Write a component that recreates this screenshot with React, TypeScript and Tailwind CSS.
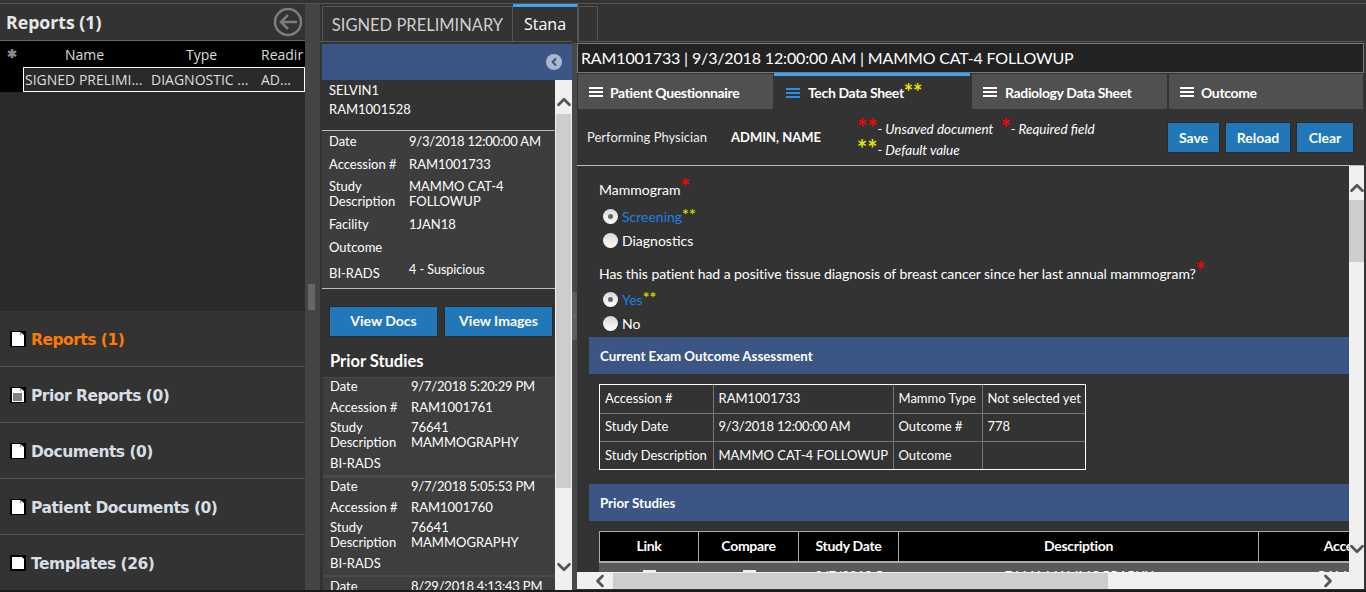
import type { ReactNode } from 'react'
import { ChevronDown, ChevronLeft, ChevronRight, ChevronUp } from 'lucide-react'

const navItems = [
  { label: 'Reports (1)', active: true, icon: 'doc' },
  { label: 'Prior Reports (0)', icon: 'prior' },
  { label: 'Documents (0)', icon: 'doc' },
  { label: 'Patient Documents (0)', icon: 'doc' },
  { label: 'Templates (26)', icon: 'tpl' },
]

const priorStudies = [
  { date: '9/7/2018 5:20:29 PM', accession: 'RAM1001761' },
  { date: '9/7/2018 5:05:53 PM', accession: 'RAM1001760' },
]

function NavIcon({ type }: { type: string }) {
  if (type === 'tpl') {
    return (
      <svg width="16" height="16" viewBox="0 0 16 16" className="shrink-0">
        <rect width="16" height="16" fill="#000" />
        <path d="M2 2h10l2 2v10H2z" fill="#fff" />
      </svg>
    )
  }
  return (
    <svg width="16" height="16" viewBox="0 0 16 16" className="shrink-0">
      <rect width="16" height="16" fill="#000" />
      <path d="M2 1h8v3h4v11H2z" fill="#fff" />
      <path d="M10.5 1l3.5 3h-3.5z" fill="#fff" />
      {type === 'prior' && <rect x="3" y="6" width="9" height="8" fill="#808080" />}
    </svg>
  )
}

function InfoRow({ label, value, className, labelWidth = 'w-[80px]' }: { label: ReactNode; value?: ReactNode; className: string; labelWidth?: string }) {
  return (
    <div className={`flex leading-[15px] ${className}`}>
      <div className={`shrink-0 ${labelWidth}`}>{label}</div>
      <div>{value}</div>
    </div>
  )
}

function DateText({ children }: { children: ReactNode }) {
  return <span className="tracking-[-0.2px]">{children}</span>
}

function MenuLines({ color }: { color: string }) {
  return (
    <svg width="14" height="10" viewBox="0 0 14 10" className="shrink-0">
      <path d="M0 1h14M0 5h14M0 9h14" stroke={color} strokeWidth="2" />
    </svg>
  )
}

function Radio({ checked }: { checked?: boolean }) {
  return (
    <span className="flex h-[15px] w-[15px] shrink-0 items-center justify-center rounded-full bg-gradient-to-b from-[#d8d8d8] to-white">
      {checked && <span className="h-[5px] w-[5px] rounded-full bg-[#666]" />}
    </span>
  )
}

// large asterisks sit on a zero line height so they don't push the line apart
function Star({ className, count = 2 }: { className: string; count?: number }) {
  return (
    <span className={`relative font-bold not-italic leading-[0] ${className}`}>
      {'*'.repeat(count)}
    </span>
  )
}

function SectionBar({ children }: { children: ReactNode }) {
  return (
    <div className="flex h-[37px] items-center bg-[#3b5684] pl-[11px] pt-[3px] text-[13.3px] font-bold text-white">
      {children}
    </div>
  )
}

function Button({ children, className }: { children: ReactNode; className: string }) {
  return (
    <button className={`h-[31px] border border-[#2b2b2b] bg-[#2277b8] text-[14px] font-bold text-white ${className}`}>
      {children}
    </button>
  )
}

export default function App() {
  return (
    <div className="flex h-[592px] w-[1366px] flex-col overflow-hidden bg-[#333] font-['Lato',sans-serif] text-[14px] text-white">
      <div className="h-[4px] shrink-0 border-b border-[#555] bg-[#333]" />

      <div className="flex h-[586px] min-h-0 shrink-0">
        {/* Left panel */}
        <div className="flex w-[305px] shrink-0 flex-col overflow-hidden font-['Open_Sans',sans-serif]">
          <div className="flex h-[37px] shrink-0 items-center justify-between border-b border-[#666] pl-[6px] pr-[2px]">
            <span className="text-[17.7px] font-bold text-[#e8e8e8]">Reports (1)</span>
            <svg width="30" height="30" viewBox="0 0 30 30" fill="none" stroke="#7d7d7d">
              <circle cx="15" cy="15" r="13" strokeWidth="2.5" />
              <path d="M24 15H8M15 8l-7 7 7 7" strokeWidth="2.5" />
            </svg>
          </div>
          <div className="flex h-[26px] shrink-0 items-center bg-black text-[14px] text-[#ddd]">
            <span className="w-[23px] pl-[7px] text-[12px] font-bold leading-none text-[#888]">✱</span>
            <span className="w-[101px] pl-[42px]">Name</span>
            <span className="w-[137px] whitespace-nowrap pl-[62px]">Type</span>
            <span className="whitespace-nowrap">Readir</span>
          </div>
          <div className="flex h-[25px] shrink-0 bg-[#2a2a2a] text-[14px] text-[#ddd]">
            <div className="w-[23px] bg-black" />
            <div className="flex w-[282px] items-center whitespace-nowrap border border-white pl-[1px]">
              <span className="w-[126px]">SIGNED PRELIMI...</span>
              <span className="w-[110px]">DIAGNOSTIC ...</span>
              <span>AD...</span>
            </div>
          </div>
          <div className="h-[219px] shrink-0 bg-[#2a2a2a]" />
          {navItems.map((item) => (
            <div key={item.label} className="flex h-[56px] shrink-0 items-center gap-[5px] border-b border-[#555] pl-[10px] pt-[1px] font-['DejaVu_Sans',sans-serif]">
              <NavIcon type={item.icon} />
              <span className={`pt-[4px] text-[15.5px] font-bold tracking-[-0.5px] ${item.active ? 'text-[#ff7a00]' : 'text-[#d9dee3]'}`}>
                {item.label}
              </span>
            </div>
          ))}
        </div>

        {/* Splitter */}
        <div className="flex w-[15px] shrink-0 flex-col bg-[#444]">
          <div className="ml-[3px] mt-[280px] h-[26px] w-[7px] bg-[#666]" />
        </div>

        {/* Center panel */}
        <div className="flex w-[252px] shrink-0 flex-col text-[13px]">
          <div className="flex h-[38px] shrink-0 items-end border-b border-[#555] pl-[2px]">
            <div className="flex h-[35px] w-[191px] shrink-0 items-center justify-center border border-b-0 border-[#555] pt-[3px] text-[16.5px] text-[#cfcfcf]">
              SIGNED PRELIMINARY
            </div>
            <div className="flex h-[37px] w-[65px] shrink-0 items-center justify-center border-t-[3px] border-r border-[#3ea6ee] border-r-[#555] font-['Open_Sans',sans-serif] text-[16px]">
              Stana
            </div>
          </div>
          <div className="ml-[2px] mt-[2px] flex h-[36px] shrink-0 items-center justify-end bg-[#3b5684] pr-[10px]">
            <span className="flex h-[16px] w-[16px] items-center justify-center rounded-full bg-[#a9b7cf]">
              <ChevronLeft size={12} strokeWidth={4} color="#3b5684" />
            </span>
          </div>
          <div className="flex min-h-0 flex-1 pl-[2px]">
            <div className="min-w-0 flex-1 overflow-hidden">
              <div className="h-[50px] pl-[7px] pt-[1px] leading-[19px]">
                <div>SELVIN1</div>
                <div>RAM1001528</div>
              </div>
              <div className="h-[159px] border-y border-[#bbb] bg-[#3d3d3d] pl-[7px]">
                <InfoRow label="Date" value={<DateText>9/3/2018 12:00:00 AM</DateText>} className="-mt-[1px] h-[23px] items-center" />
                <InfoRow label="Accession #" value="RAM1001733" className="h-[23px] items-center" />
                <InfoRow label={<>Study<br />Description</>} value={<>MAMMO CAT-4<br />FOLLOWUP</>} className="h-[37px] items-start pt-[3px]" />
                <InfoRow label="Facility" value="1JAN18" className="h-[23px] items-center" />
                <InfoRow label="Outcome" className="h-[23px] items-center" />
                <div className="flex h-[23px] items-center">
                  <div className="mt-[7px] w-[80px]">BI-RADS</div>
                  <div className="text-[12.5px]">4 - Suspicious</div>
                </div>
              </div>
              <div className="flex gap-[6px] pl-[7px] pt-[17px]">
                <Button className="w-[109px] pb-[2px]">View Docs</Button>
                <Button className="w-[109px] pb-[2px]">View Images</Button>
              </div>
              <div className="pl-[8px] pt-[14px] text-[16.5px] font-bold leading-[21px]">Prior Studies</div>
              <div className="mt-[5px] pl-[1px]">
                {priorStudies.map((study) => (
                  <div key={study.accession} className="h-[100px] border-b-[2px] border-t border-[#4a4a4a] bg-[#3e3e3e] pl-[7px]">
                    <InfoRow label="Date" value={<DateText>{study.date}</DateText>} labelWidth="w-[81px]" className="h-[17px] items-center" />
                    <InfoRow label="Accession #" value={study.accession} labelWidth="w-[81px]" className="mt-[2px] h-[20px] items-center" />
                    <InfoRow label={<>Study<br />Description</>} value={<>76641<br />MAMMOGRAPHY</>} labelWidth="w-[81px]" className="h-[35px] items-center" />
                    <InfoRow label="BI-RADS" labelWidth="w-[81px]" className="mt-[1px] h-[20px] items-center" />
                  </div>
                ))}
                <div className="h-[20px] bg-[#3e3e3e] pl-[7px]">
                  <InfoRow label="Date" value={<DateText>8/29/2018 4:13:43 PM</DateText>} labelWidth="w-[81px]" className="h-[19px] items-center" />
                </div>
              </div>
            </div>
            {/* Scrollbar */}
            <div className="flex w-[17px] shrink-0 flex-col items-center bg-[#f0f0f0] px-[1px] text-[#555]">
              <div className="flex h-[34px] items-end justify-center pb-[1px]">
                <ChevronUp size={22} strokeWidth={3} className="shrink-0" />
              </div>
              <div className="h-[374px] w-full bg-[#cdcdcd]" />
              <div className="flex flex-1 items-start justify-center pt-[68px]">
                <ChevronDown size={22} strokeWidth={3} className="shrink-0" />
              </div>
            </div>
          </div>
        </div>

        {/* Splitter */}
        <div className="mt-[39px] flex w-[5px] shrink-0 flex-col bg-[#484848]">
          <div className="mt-[249px] flex h-[48px] items-center justify-center bg-[#5e5e5e]">
            <ChevronLeft size={8} strokeWidth={3} color="#8a8a8a" />
          </div>
        </div>

        {/* Right panel */}
        <div className="flex min-w-0 flex-1 flex-col pb-[1px] pr-[2px]">
          <div className="h-[38px] shrink-0 border-b border-[#555] pl-[1px]">
            <div className="mt-[2px] h-[35px] w-[20px] border border-b-0 border-[#555]" />
          </div>
          <div className="mt-[1px] flex h-[30px] shrink-0 items-center border border-[#777] bg-[#222] pl-[3px] text-[16px] tracking-[-0.15px]">
            RAM1001733 | 9/3/2018 12:00:00 AM | MAMMO CAT-4 FOLLOWUP
          </div>
          <div className="flex h-[36px] shrink-0 pl-[1px] text-[14px] font-bold tracking-[-0.35px]">
            <div className="mt-[1px] flex w-[195px] items-center gap-[7px] bg-[#505050] pl-[11px] pt-[1px]">
              <MenuLines color="#fff" />
              Patient Questionnaire
            </div>
            <div className="ml-[1px] flex w-[196px] items-center gap-[8px] border-t-[3px] border-[#3ea6ee] pl-[12px]">
              <MenuLines color="#2b8fe6" />
              <span>Tech Data Sheet<Star className="top-[2px] text-[22px] tracking-normal text-[#e6e600]" /></span>
            </div>
            <div className="ml-[2px] mt-[1px] flex w-[195px] items-center gap-[8px] bg-[#505050] pl-[11px] pt-[1px]">
              <MenuLines color="#fff" />
              Radiology Data Sheet
            </div>
            <div className="ml-[2px] mt-[1px] flex w-[194px] items-center gap-[7px] bg-[#505050] pl-[11px] pt-[1px]">
              <MenuLines color="#fff" />
              Outcome
            </div>
          </div>
          <div className="flex h-[57px] shrink-0 items-center border-b border-[#bbb] pl-[10px] pt-[1px]">
            <span className="w-[144px] text-[13px] text-[#eee]">Performing Physician</span>
            <span className="w-[126px] text-[13px] font-bold">ADMIN, NAME</span>
            <div className="mt-[5px] w-[310px] text-[13.5px] italic leading-[21px]">
              <div>
                <Star className="top-[3px] text-[24px] text-[#ff0000]" />- Unsaved document <span className="ml-[4px]"><Star className="top-[3px] text-[24px] text-[#ff0000]" count={1} /></span>- Required field
              </div>
              <div><Star className="top-[3px] text-[24px] text-[#e6e600]" />- Default value</div>
            </div>
            <div className="flex gap-[5px]">
              <Button className="w-[53px]">Save</Button>
              <Button className="w-[66px]">Reload</Button>
              <Button className="w-[58px]">Clear</Button>
            </div>
          </div>

          <div className="flex min-h-0 flex-1">
            <div className="flex min-w-0 flex-1 flex-col">
              <div className="min-h-0 flex-1 overflow-hidden pl-[12px]">
                <div className="pl-[10px] pt-[11px]">
                  <div className="leading-[26px]">Mammogram<Star className="top-0 text-[22px] text-[#ff0000]" count={1} /></div>
                  <div className="mt-[1px] flex h-[24px] items-center gap-[4px] pl-[4px]">
                    <Radio checked />
                    <span className="text-[#1a82e8]">Screening<Star className="-top-[2px] text-[16px] text-[#d4d400]" /></span>
                  </div>
                  <div className="flex h-[24px] items-center gap-[4px] pl-[4px]">
                    <Radio />
                    <span>Diagnostics</span>
                  </div>
                  <div className="mt-[9px] leading-[26px] tracking-[-0.06px]">
                    Has this patient had a positive tissue diagnosis of breast cancer since her last annual mammogram?<Star className="-top-[1px] text-[22px] text-[#ff0000]" count={1} />
                  </div>
                  <div className="flex h-[24px] items-center gap-[4px] pl-[4px]">
                    <Radio checked />
                    <span className="text-[#1a82e8]">Yes<Star className="-top-[2px] text-[16px] text-[#d4d400]" /></span>
                  </div>
                  <div className="flex h-[24px] items-center gap-[4px] pl-[4px]">
                    <Radio />
                    <span>No</span>
                  </div>
                </div>
                <div className="mt-[2px]"><SectionBar>Current Exam Outcome Assessment</SectionBar></div>
                <div className="ml-[10px] mt-[10px] w-[487px] border border-white">
                  <table className="w-full table-fixed border-collapse text-[13px] [&_td]:h-[28px] [&_td]:whitespace-nowrap [&_td]:border [&_td]:border-[#777] [&_td]:pl-[5px]">
                    <tbody>
                      <tr>
                        <td className="w-[113px] !border-t-0 !border-l-0">Accession #</td>
                        <td className="w-[180px] !border-t-0">RAM1001733</td>
                        <td className="w-[89px] !border-t-0">Mammo Type</td>
                        <td className="!border-t-0 !border-r-0">Not selected yet</td>
                      </tr>
                      <tr>
                        <td className="!border-l-0">Study Date</td>
                        <td><DateText>9/3/2018 12:00:00 AM</DateText></td>
                        <td>Outcome #</td>
                        <td className="!border-r-0">778</td>
                      </tr>
                      <tr>
                        <td className="!border-b-0 !border-l-0">Study Description</td>
                        <td className="!border-b-0">MAMMO CAT-4 FOLLOWUP</td>
                        <td className="!border-b-0">Outcome</td>
                        <td className="!border-b-0 !border-r-0" />
                      </tr>
                    </tbody>
                  </table>
                </div>
                <div className="mt-[14px]"><SectionBar>Prior Studies</SectionBar></div>
                <div className="ml-[10px] mt-[10px] w-[860px] border-t border-[#aaa]">
                  <div className="flex h-[29px] items-center bg-black text-center text-[14px] font-bold tracking-[-0.3px] [&>div]:flex [&>div]:h-full [&>div]:items-center [&>div]:justify-center [&>div]:border-r [&>div]:border-[#aaa] [&>div]:pb-[2px]">
                    <div className="w-[100px] border-l border-[#aaa]">Link</div>
                    <div className="w-[100px]">Compare</div>
                    <div className="w-[100px]">Study Date</div>
                    <div className="w-[360px]">Description</div>
                    <div className="w-[200px] !border-r-0">Accession #</div>
                  </div>
                  <div className="flex h-[20px] border-t-[2px] border-[#aaa] bg-[#5a5a5a] text-center text-[13px] leading-[13px] [&>div]:pt-[7px]">
                    <div className="w-[100px]"><span className="mx-auto block h-[13px] w-[13px] bg-[#eee]" /></div>
                    <div className="w-[100px]"><span className="mx-auto block h-[13px] w-[13px] bg-[#eee]" /></div>
                    <div className="w-[100px]">9/7/2018 5</div>
                    <div className="w-[360px]">76641 MAMMOGRAPHY</div>
                    <div className="w-[200px]">RAM1001761</div>
                  </div>
                </div>
              </div>
              {/* Horizontal scrollbar */}
              <div className="flex h-[17px] shrink-0 items-center bg-[#f0f0f0] text-[#555]">
                <div className="flex w-[36px] justify-center pl-[10px]"><ChevronLeft size={20} strokeWidth={3.2} className="shrink-0" /></div>
                <div className="h-[16px] w-[495px] bg-[#cdcdcd]" />
                <div className="flex flex-1 justify-end pr-[11px]"><ChevronRight size={20} strokeWidth={3.2} className="shrink-0" /></div>
              </div>
            </div>
            <div className="flex w-[15px] shrink-0 flex-col items-center bg-[#f0f0f0] text-[#555]">
              <div className="flex h-[34px] items-end justify-center pb-[1px]"><ChevronUp size={22} strokeWidth={3} className="shrink-0" /></div>
              <div className="h-[62px] w-full bg-[#cdcdcd]" />
              <div className="flex flex-1 items-start justify-center pt-[276px]"><ChevronDown size={22} strokeWidth={3} className="shrink-0" /></div>
            </div>
          </div>
        </div>
      </div>
      <div className="h-[2px] bg-[#1a1a1a]" />
    </div>
  )
}
